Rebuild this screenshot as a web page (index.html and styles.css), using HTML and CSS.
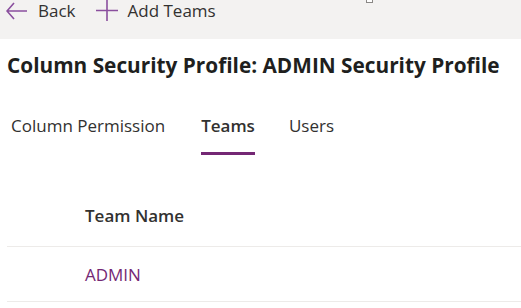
FILE: index.html
```html
<!DOCTYPE html>
<html>
<head>
    <link rel="stylesheet" href="styles.css">
</head>
<body>
    <div class="command-bar">
        <button class="cmd-button">
            <svg class="cmd-icon" width="22" height="20" viewBox="0 0 22 20">
                <path d="M8 2 L1 10 L8 18 M1 10 H21" fill="none" stroke="#8a4f9e" stroke-width="1.6"/>
            </svg>
            <span>Back</span>
        </button>
        <button class="cmd-button">
            <svg class="cmd-icon" width="22" height="22" viewBox="0 0 22 22">
                <path d="M11 0 V21 M0 10.5 H22" fill="none" stroke="#8a4f9e" stroke-width="1.6"/>
            </svg>
            <span>Add Teams</span>
        </button>
        <span class="cursor-mark"></span>
    </div>

    <h1 class="page-title">Column Security Profile: ADMIN Security Profile</h1>

    <div class="tab-list">
        <div class="tab">Column Permission</div>
        <div class="tab active">Teams</div>
        <div class="tab">Users</div>
    </div>

    <div class="grid">
        <div class="grid-row header">
            <div class="cell">Team Name</div>
        </div>
        <div class="grid-row">
            <div class="cell link">ADMIN</div>
        </div>
    </div>
</body>
</html>
```

FILE: styles.css
```css
body {
    margin: 0;
    background: white;
    font-family: "Segoe UI", "Open Sans", "Noto Sans", sans-serif;
    color: #323130;
}

/* top command bar */
.command-bar {
    position: relative;
    height: 39px;
    background: #f3f2f1;
    display: flex;
    align-items: flex-start;
    padding-left: 6px;
}

.cmd-button {
    display: flex;
    align-items: center;
    height: 21px;
    margin-right: 20px;
    padding: 0;
    border: none;
    background: transparent;
    font-family: inherit;
    font-size: 17px;
    color: #323130;
}

.cmd-icon {
    margin-right: 10px;
}

.cursor-mark {
    position: absolute;
    left: 366px;
    top: -2px;
    width: 5px;
    height: 3px;
    border: 1px solid #8a8886;
    background: white;
}

.page-title {
    margin: 0;
    padding: 12px 7px 0;
    font-size: 20.8px;
    font-weight: 700;
    color: #201f1e;
    line-height: 28px;
    white-space: nowrap;
}

/* tabs */
.tab-list {
    display: flex;
    padding: 36px 0 0 11px;
}

.tab {
    font-size: 17px;
    line-height: 22px;
    padding-bottom: 15px;
    margin-right: 36px;
    border-bottom: 3px solid transparent;
}

.tab.active {
    font-weight: 600;
    margin-right: 34px;
    border-bottom-color: #742774;
}

/* grid */
.grid {
    margin: 29px 0 0 7px;
}

.grid-row {
    height: 54px;
    display: flex;
    align-items: center;
    border-bottom: 1px solid #edebe9;
    padding-left: 78px;
}

.grid-row.header {
    height: 62px;
    font-weight: 600;
}

.cell {
    font-size: 17px;
}

.cell.link {
    color: #742774;
}
```
